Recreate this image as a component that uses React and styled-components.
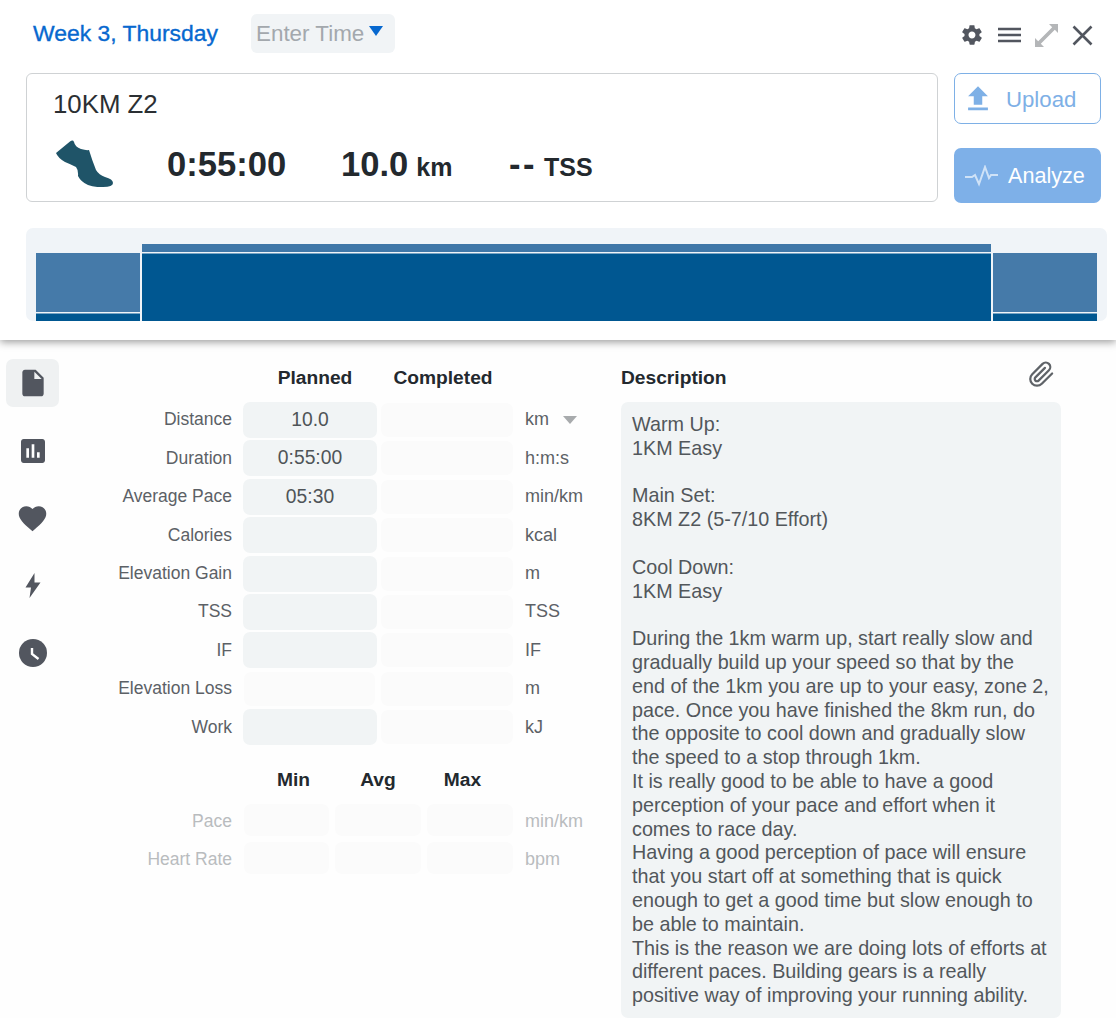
import React from "react";
import styled, { createGlobalStyle } from "styled-components";
import { MdFileUpload, MdInsertDriveFile, MdAssessment, MdFavorite } from "react-icons/md";
import { IoMdSettings } from "react-icons/io";
import { FiPaperclip } from "react-icons/fi";

const Global = createGlobalStyle`
  html, body { margin: 0; padding: 0; background: #fefefe; }
  body { font-family: "Liberation Sans", Arial, sans-serif; color: #23292e; }
  * { box-sizing: border-box; }
`;

const Page = styled.div`
  width: 1116px;
  height: 1018px;
  overflow: hidden;
  background: #fefefe;
`;

const Header = styled.header`
  height: 340px;
  background: #fff;
  box-shadow: 0 2px 8px rgba(0, 0, 0, 0.4);
  padding: 14px 9px 0 26px;
  display: flex;
  flex-direction: column;
  position: relative;
`;

const TopRow = styled.div`
  display: flex;
  align-items: center;
  height: 39px;
  margin-bottom: 20px;
`;

const Week = styled.div`
  font-size: 22.9px;
  color: #0768cf;
  margin-left: 7px;
  width: 218px;
  -webkit-text-stroke: 0.35px #0768cf;
`;

const TimePill = styled.div`
  width: 144px;
  height: 39px;
  background: #f1f4f6;
  border-radius: 6px;
  display: flex;
  padding: 7px 0 0 5px;
  font-size: 22.4px;
  color: #a3a8ad;
  gap: 5px;
`;

const Caret = styled.span`
  width: 0;
  height: 0;
  margin-top: ${(p) => p.$t ?? 5}px;
  border-left: ${(p) => p.$w}px solid transparent;
  border-right: ${(p) => p.$w}px solid transparent;
  border-top: ${(p) => p.$h}px solid ${(p) => p.$c};
`;

const Tools = styled.div`
  margin-left: auto;
  margin-right: 14px;
  display: flex;
  align-items: center;
  gap: 14px;
  color: #52565f;
  padding-top: 3px;
`;

const SummaryRow = styled.div`
  display: flex;
  gap: 16px;
`;

const Card = styled.div`
  width: 912px;
  height: 129px;
  border: 1px solid #cfd2d4;
  border-radius: 6px;
  padding: 14px 0 0 26px;
`;

const CardTitle = styled.div`
  font-size: 25.8px;
  line-height: 32px;
  color: #2b2f33;
`;

const Stats = styled.div`
  display: flex;
  align-items: flex-start;
  margin-top: 20px;
  height: 50px;
`;

const Shoe = styled.svg`
  width: 57px;
  height: 47px;
  margin-left: 3px;
  flex: none;
`;

const Stat = styled.div`
  font-size: 34.6px;
  line-height: 50px;
  margin-top: -1px;
  font-weight: 700;
  color: #23292e;
  width: ${(p) => p.$w}px;
  margin-left: ${(p) => p.$m || 0}px;
  white-space: nowrap;
`;

const StatUnit = styled.span`
  font-size: 25px;
  margin-left: ${(p) => p.$m}px;
`;

const Dashes = styled.span`
  letter-spacing: 2.500px;
`;

const Actions = styled.div`
  width: 147px;
  display: flex;
  flex-direction: column;
  gap: 24px;
`;

const UploadBtn = styled.div`
  height: 51px;
  border: 1px solid #7eb0e6;
  border-radius: 7px;
  display: flex;
  align-items: center;
  color: #7eb0e6;
  font-size: 22.200px;
  padding-left: 6px;
  gap: 11px;
`;

const UploadText = styled.span`
  margin-top: 3px;
`;

const AnalyzeBtn = styled.div`
  height: 55px;
  background: #7eb0e8;
  border-radius: 7px;
  display: flex;
  align-items: center;
  color: #fff;
  font-size: 21.600px;
  padding-left: 11px;
  gap: 10px;
`;

const ChartBox = styled.div`
  margin-top: 25px;
  height: 93px;
  width: 1081px;
  background: #f0f4f8;
  border-radius: 7px;
`;

const ChartSvg = styled.svg`
  display: block;
`;

const Body = styled.main`
  display: flex;
  padding: 19px 0 0 6px;
`;

const Side = styled.nav`
  width: 53px;
  display: flex;
  flex-direction: column;
  align-items: center;
`;

const SideBtn = styled.div`
  width: 53px;
  height: 48px;
  margin-bottom: 19.5px;
  border-radius: 7px;
  display: flex;
  align-items: center;
  justify-content: center;
  color: #52565f;
  background: ${(p) => (p.$active ? "#eff1f2" : "transparent")};
`;

const Form = styled.section`
  width: 527px;
  margin-left: 9px;
`;

const Grid = styled.div`
  display: grid;
  grid-template-columns: 164px 145px 136px 1fr;
  grid-auto-rows: 36px;
  row-gap: 2.4px;
  align-items: center;
  grid-template-rows: 40.6px;
`;

const ColHead = styled.div`
  font-size: 19.200px;
  font-weight: 700;
  text-align: center;
  color: #23292e;
  height: 40.6px;
  line-height: 37px;
  padding: ${(p) => p.$pad};
  ${(p) => p.$start && `grid-column: ${p.$start};`}
  white-space: nowrap;
`;

const Label = styled.div`
  font-size: 17.5px;
  text-align: right;
  color: ${(p) => (p.$dim ? "#b9bcbe" : "#5c6166")};
`;

const MiniLabel = styled(Label)`
  padding: 2px 6px 0 0;
`;

const Field = styled.div`
  height: ${(p) => (p.$filled ? 36 : 34)}px;
  margin: ${(p) => p.$m || "0"};
  border-radius: 7px;
  background: ${(p) => (p.$filled ? "#f1f4f5" : "#fbfbfb")};
  font-size: 19.300px;
  color: #4f5458;
  display: flex;
  align-items: center;
  justify-content: center;
`;

const Unit = styled.div`
  font-size: 18px;
  padding-left: 12px;
  color: ${(p) => (p.$dim ? "#b9bcbe" : "#5c6166")};
  display: flex;
  align-items: center;
  gap: 14px;
  white-space: nowrap;
`;

const MiniUnit = styled(Unit)`
  padding: 2px 0 0 6px;
`;

const Grid2 = styled.div`
  display: grid;
  grid-template-columns: 170px 85px 86px 86px 1fr;
  column-gap: 6px;
  row-gap: 6px;
  margin-top: 23px;
  align-items: center;
`;

const MiniHead = styled.div`
  font-size: 19.200px;
  font-weight: 700;
  text-align: center;
  height: 30px;
  line-height: 24px;
  padding: ${(p) => p.$pad || 0};
  ${(p) => p.$first && "grid-column: 2;"}
`;

const MiniField = styled.div`
  height: 32px;
  border-radius: 7px;
  background: #fbfbfb;
`;

const Desc = styled.section`
  width: 440px;
  margin-left: 26px;
`;

const DescHead = styled.div`
  height: 43px;
  display: flex;
  align-items: flex-start;
  justify-content: space-between;
  font-size: 19.200px;
  font-weight: 700;
  line-height: 37px;
`;

const Clip = styled.div`
  color: #5f6368;
  margin-right: 6px;
  margin-top: 2px;
  line-height: 0;
`;

const DescBox = styled.div`
  height: 616px;
  background: #f1f4f5;
  border-radius: 7px;
  padding: 11px 9px 0 11px;
  font-size: 19.750px;
  line-height: 23.8px;
  color: #52575b;
  white-space: pre-wrap;
`;

const rows = [
  ["Distance", "10.0", true, "km"],
  ["Duration", "0:55:00", true, "h:m:s"],
  ["Average Pace", "05:30", true, "min/km"],
  ["Calories", "", true, "kcal"],
  ["Elevation Gain", "", true, "m"],
  ["TSS", "", true, "TSS"],
  ["IF", "", true, "IF"],
  ["Elevation Loss", "", false, "m"],
  ["Work", "", true, "kJ"],
];

const text = `Warm Up:
1KM Easy

Main Set:
8KM Z2 (5-7/10 Effort)

Cool Down:
1KM Easy

During the 1km warm up, start really slow and gradually build up your speed so that by the end of the 1km you are up to your easy, zone 2, pace. Once you have finished the 8km run, do the opposite to cool down and gradually slow the speed to a stop through 1km.
It is really good to be able to have a good perception of your pace and effort when it comes to race day.
Having a good perception of pace will ensure that you start off at something that is quick enough to get a good time but slow enough to be able to maintain.
This is the reason we are doing lots of efforts at different paces. Building gears is a really positive way of improving your running ability.`;

export default function App() {
  return (
    <Page>
      <Global />
      <Header>
        <TopRow>
          <Week>Week 3, Thursday</Week>
          <TimePill>
            Enter Time
            <Caret $w={7.5} $h={10} $c="#0768cf" />
          </TimePill>
          <Tools>
            <IoMdSettings size={24} />
            <svg width="23" height="16" viewBox="0 0 23 16" fill="none" stroke="#52565f" strokeWidth="2.4">
              <path d="M0 2h23M0 8h23M0 14h23" />
            </svg>
            <svg width="23" height="23" viewBox="0 0 23 23" fill="#b4b6b8" stroke="none">
              <path d="M14 0h9v9l-3.200-3.200L5.800 19.800 9 23H0v-9l3.200 3.200L17.200 3.200z" />
            </svg>
            <svg width="21" height="21" viewBox="0 0 21 21" fill="none" stroke="#52565f" strokeWidth="2.6">
              <path d="M1.500 1.500l18 18M19.500 1.500l-18 18" />
            </svg>
          </Tools>
        </TopRow>
        <SummaryRow>
          <Card>
            <CardTitle>10KM Z2</CardTitle>
            <Stats>
              <Shoe viewBox="0 0 57 47">
                <path
                  fill="#1f5468"
                  d="M0 13L14 1.500Q17-0.500 18 2Q19 7 25 9Q30 10.500 33 10Q36 20 40 30Q43 35 49 37Q57 39 57 43Q57 47 47 47Q38 47.500 32 45Q25 42 22 36Q22.500 30 20 27Q14 24 9 22Q2 18 0 13z"
                />
              </Shoe>
              <Stat $w={174} $m={54}>0:55:00</Stat>
              <Stat $w={168}>
                10.0<StatUnit $m={8}>km</StatUnit>
              </Stat>
              <Stat $w={120}>
                <Dashes>--</Dashes>
                <StatUnit $m={7}>TSS</StatUnit>
              </Stat>
            </Stats>
          </Card>
          <Actions>
            <UploadBtn>
              <MdFileUpload size={34} />
              <UploadText>Upload</UploadText>
            </UploadBtn>
            <AnalyzeBtn>
              <svg width="33" height="22" viewBox="0 0 33 22" fill="none" stroke="#cfe2f7" strokeWidth="2">
                <path d="M0 12h7l3-2 4 9 6-17 4 11 2-3h7" />
              </svg>
              Analyze
            </AnalyzeBtn>
          </Actions>
        </SummaryRow>
        <ChartBox>
          <ChartSvg width="1081" height="93" viewBox="0 0 1081 93">
            <rect x="10" y="25" width="104" height="59" fill="#457aa9" />
            <rect x="10" y="85.500" width="104" height="7.500" fill="#005791" />
            <rect x="116" y="16" width="849" height="8" fill="#3f77a8" />
            <rect x="116" y="25.500" width="849" height="67.500" fill="#005791" />
            <rect x="967" y="25" width="104" height="59" fill="#457aa9" />
            <rect x="967" y="85.500" width="104" height="7.500" fill="#005791" />
          </ChartSvg>
        </ChartBox>
      </Header>
      <Body>
        <Side>
          <SideBtn $active>
            <MdInsertDriveFile size={32} />
          </SideBtn>
          <SideBtn>
            <MdAssessment size={32} />
          </SideBtn>
          <SideBtn>
            <MdFavorite size={33} />
          </SideBtn>
          <SideBtn>
            <svg width="16" height="25" viewBox="0 0 16 25" fill="#52565f">
              <path d="M9.500 0L0.500 14.500h5.500L4.500 25l11-15.500H9.500z" />
            </svg>
          </SideBtn>
          <SideBtn>
            <svg width="28" height="28" viewBox="0 0 28 28">
              <circle cx="14" cy="14" r="14" fill="#52565f" />
              <path d="M13 9V15L19.500 20" stroke="#fff" strokeWidth="2.400" fill="none" />
            </svg>
          </SideBtn>
        </Side>
        <Form>
          <Grid>
            <ColHead $start={2} $pad="0 0 0 21px">Planned</ColHead>
            <ColHead $pad="0 4px 0 0">Completed</ColHead>
            <span />
            {rows.map(([l, v, filled, u]) => (
              <React.Fragment key={l}>
                <Label>{l}</Label>
                <Field $filled={filled} $m={filled ? "0 0 0 11px" : "0 2px 0 12px"}>{v}</Field>
                <Field $m="0 0 0 4px" />
                <Unit>
                  {u}
                  {l === "Distance" && <Caret $t={0} $w={7} $h={8} $c="#a8abad" />}
                </Unit>
              </React.Fragment>
            ))}
          </Grid>
          <Grid2>
            <MiniHead $first $pad="0 0 0 14px">Min</MiniHead>
            <MiniHead>Avg</MiniHead>
            <MiniHead $pad="0 15px 0 0">Max</MiniHead>
            <span />
            <MiniLabel $dim>Pace</MiniLabel>
            <MiniField />
            <MiniField />
            <MiniField />
            <MiniUnit $dim>min/km</MiniUnit>
            <MiniLabel $dim>Heart Rate</MiniLabel>
            <MiniField />
            <MiniField />
            <MiniField />
            <MiniUnit $dim>bpm</MiniUnit>
          </Grid2>
        </Form>
        <Desc>
          <DescHead>
            Description
            <Clip>
              <FiPaperclip size={27} />
            </Clip>
          </DescHead>
          <DescBox>{text}</DescBox>
        </Desc>
      </Body>
    </Page>
  );
}
